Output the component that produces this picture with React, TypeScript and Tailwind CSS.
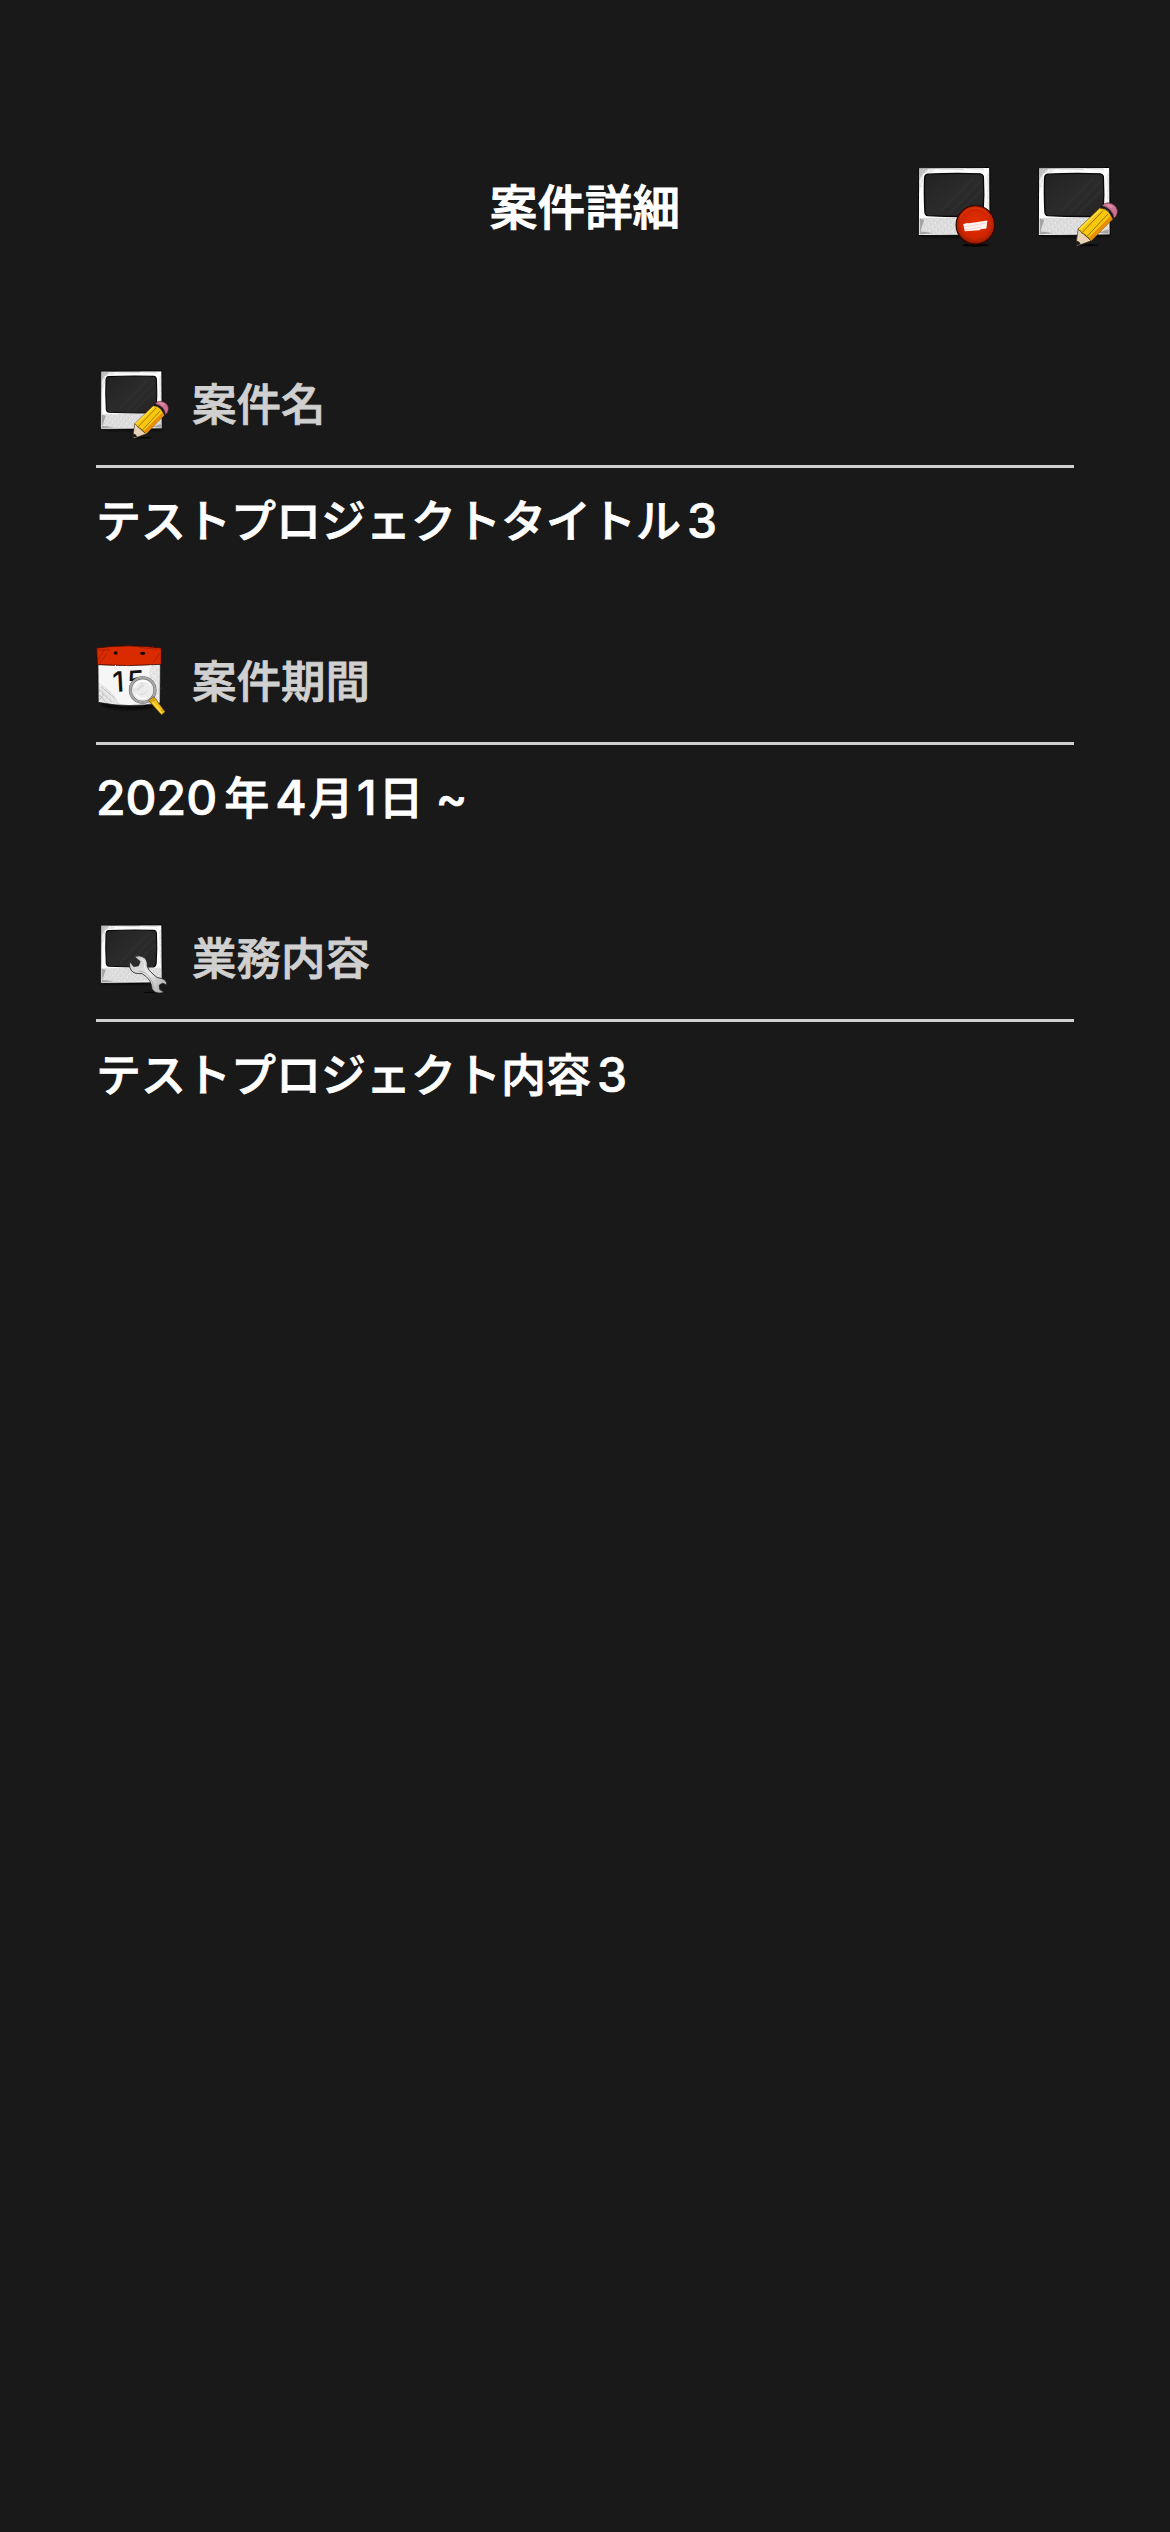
import type { ReactNode } from "react";

function SketchDefs() {
  return (
    <svg className="absolute h-0 w-0" aria-hidden="true">
      <defs>
        <filter id="rough" x="-10%" y="-10%" width="120%" height="120%">
          <feTurbulence type="fractalNoise" baseFrequency="0.09" numOctaves="2" seed="4" result="n" />
          <feDisplacementMap in="SourceGraphic" in2="n" scale="5" xChannelSelector="R" yChannelSelector="G" />
        </filter>
        <filter id="soft" x="-30%" y="-100%" width="160%" height="300%">
          <feGaussianBlur stdDeviation="4" />
        </filter>
        <pattern id="hatch" width="14" height="14" patternUnits="userSpaceOnUse" patternTransform="rotate(38)">
          <path d="M2 0V14M8 0V9M11 4V14" stroke="#8a8a8a" strokeWidth="1.6" opacity="0.6" />
        </pattern>
        <linearGradient id="glass" x1="0" y1="0" x2="1" y2="1">
          <stop offset="0" stopColor="#222" />
          <stop offset="0.5" stopColor="#2b2b2b" />
          <stop offset="1" stopColor="#252525" />
        </linearGradient>
        <radialGradient id="ball" cx="0.5" cy="0.45" r="0.55">
          <stop offset="0" stopColor="#e43000" />
          <stop offset="0.7" stopColor="#d02600" />
          <stop offset="1" stopColor="#961b00" />
        </radialGradient>
        <linearGradient id="steel" x1="0" y1="0" x2="1" y2="1">
          <stop offset="0" stopColor="#c4c4c4" />
          <stop offset="0.5" stopColor="#e6e6e6" />
          <stop offset="1" stopColor="#a5a5a5" />
        </linearGradient>
      </defs>
    </svg>
  );
}

function Frame({ className, children }: { className: string; children: ReactNode }) {
  return (
    <svg className={className} viewBox="36 45 256 246" aria-hidden="true">
      <ellipse cx="160" cy="256" rx="112" ry="6" fill="#000" opacity="0.7" filter="url(#soft)" />
      <g filter="url(#rough)">
        <path d="M53 53L267 52L268 255L52 257Z" fill="#fcfcfc" stroke="#060606" strokeWidth="3" />
        <path d="M57 204L264 202L264 250L56 253Z" fill="#ececec" />
        <path d="M57 204L264 202L264 250L56 253Z" fill="url(#hatch)" />
        <path d="M54 54L110 54L92 66L68 70L66 96L54 130Z" fill="url(#hatch)" />
        <path d="M54 54H84L62 76L55 90Z" fill="#999" opacity="0.5" />
        <path d="M56 205L70 210L56 250ZM56 244L100 250L56 254ZM230 249L264 238L264 252Z" fill="#808080" opacity="0.6" />
        <path d="M257 80L266 60V190L262 190Z" fill="url(#hatch)" />
        <path d="M110 56L190 58M196 55L250 57" stroke="#c0c0c0" strokeWidth="2" />
      </g>
      <path
        d="M80 72Q160 68 238 71Q247 72 248 81Q251 135 247 188Q246 197 237 199Q160 201 82 197Q73 196 72 187Q69 130 71 83Q72 73 80 72Z"
        fill="url(#glass)"
        stroke="#080808"
        strokeWidth="4"
      />
      <path
        d="M122 184L218 82M148 188L240 94M172 190L242 122"
        stroke="#363636"
        strokeWidth="7"
        opacity="0.4"
        strokeLinecap="round"
      />
      {children}
    </svg>
  );
}

function Pencil() {
  return (
    <g>
      <ellipse cx="196" cy="286" rx="38" ry="3" fill="#000" opacity="0.8" />
      <path d="M172 237L165 286L170 288L211 273Z" fill="#e9d3b4" stroke="#3b2d18" strokeWidth="2" />
      <path d="M167 272L164 287L180 283Q176 274 167 272Z" fill="#1b1b1b" />
      <path d="M171 238L237 174Q264 176 276 207L211 273Q206 262 197 260Q193 250 183 250Q180 241 171 238Z" fill="#f9c80e" stroke="#5f4300" strokeWidth="2" />
      <path d="M203 264L269 198Q273 202 276 207L211 273Q208 267 203 264Z" fill="#e88d09" />
      <path d="M183 249L247 182M198 260L262 192" stroke="#5a4500" strokeWidth="2" />
      <path d="M176 238L238 179" stroke="#ffe24b" strokeWidth="4" />
      <path d="M236 172Q266 176 277 208L283 204Q279 174 243 166Z" fill="#181920" />
      <path d="M244 167Q254 154 274 161Q292 170 290 188Q288 200 280 205Q276 176 244 167Z" fill="#cc7190" stroke="#552737" strokeWidth="2" />
      <path d="M255 164Q266 160 278 170Q270 176 263 170Z" fill="#dc8fa8" />
    </g>
  );
}

function MinusBadge() {
  return (
    <g>
      <ellipse cx="224" cy="286" rx="40" ry="5" fill="#000" opacity="0.8" />
      <g filter="url(#rough)">
        <circle cx="224" cy="225" r="58" fill="url(#ball)" stroke="#310800" strokeWidth="4" />
        <path d="M177 205Q194 171 228 174Q254 176 266 198" stroke="#f05a31" strokeWidth="3" opacity="0.35" fill="none" />
      </g>
      <path d="M187 223L198 219L205 220L260 212L257 236L240 238L236 241L192 244Z" fill="#fff3ef" />
      <path d="M190 231L258 219M192 240L240 232" stroke="#f8c9bc" strokeWidth="2" />
    </g>
  );
}

function Wrench() {
  return (
    <g transform="translate(-3.3 -0.9) scale(1.176)">
      <ellipse cx="208" cy="247" rx="34" ry="3" fill="#000" opacity="0.8" />
      <path
        d="M148 139Q165 134 177 142Q188 151 186 167Q188 180 204 192Q214 205 229 205Q240 207 244 217L245 224L232 219L222 225L224 238L237 246Q218 252 206 243Q199 236 199 226Q197 211 183 199Q171 186 158 190Q140 190 134 171L133 153L146 169L160 167L165 154Z"
        fill="url(#steel)"
        stroke="#242424"
        strokeWidth="2.5"
        strokeLinejoin="round"
      />
      <path d="M169 147Q181 153 178 168Q181 184 202 200" stroke="#fff" strokeWidth="2.5" fill="none" opacity="0.7" />
      <path d="M160 184Q180 181 193 201Q205 215 205 232" stroke="#999" strokeWidth="2" fill="none" />
    </g>
  );
}

function CalendarIcon() {
  return (
    <svg className="mb-[3px] ml-[-1px] h-[71px] w-[71px]" viewBox="30 33 213 213" aria-hidden="true">
      <path d="M42 206Q130 230 228 208L222 215Q130 236 55 216Z" fill="#000" filter="url(#soft)" />
      <g filter="url(#rough)">
        <path d="M39 90L226 88L225 207Q130 223 40 205Z" fill="#f6f6f6" stroke="#151515" strokeWidth="2" />
        <path d="M40 145L75 170L108 212L41 204ZM195 92H224V206L190 210Z" fill="url(#hatch)" />
        <path d="M42 167L82 206M42 182L64 206M50 160L92 194M44 198L56 180" stroke="#aaa" strokeWidth="2" />
        <path d="M35 42Q130 29 229 42L229 91Q130 98 37 92Z" fill="#d92b05" stroke="#3c0b02" strokeWidth="2.5" />
        <path d="M36 82L58 48M44 88L66 58M207 84L223 59M40 48H76M160 40L218 46" stroke="#961b00" strokeWidth="2" />
      </g>
      <ellipse cx="92" cy="57" rx="6" ry="5" fill="#210803" />
      <ellipse cx="173" cy="58" rx="8" ry="5" fill="#210803" />
      <g className="fill-[#111] font-[Inter,sans-serif] text-[84px] font-medium">
        <text x="84" y="174" transform="rotate(-3 84 174)">
          1
        </text>
        <text x="128" y="172" transform="rotate(-3 128 172)">
          5
        </text>
      </g>
      <circle cx="173" cy="168" r="37" fill="#ebebeb" fillOpacity="0.97" stroke="#555" strokeWidth="9" />
      <circle cx="173" cy="168" r="37" fill="none" stroke="#a8a8a8" strokeWidth="7" />
      <path d="M148 160Q154 142 173 141Q190 141 197 154M152 181Q165 199 187 190" stroke="#fff" strokeWidth="4" fill="none" />
      <path d="M157 168Q164 154 177 155M165 181Q182 182 187 169" stroke="#ccc" strokeWidth="2" fill="none" />
      <path d="M191 200L207 188L240 233L230 243Z" fill="#f5bd16" stroke="#553b00" strokeWidth="2" />
      <path d="M196 203L208 193M199 207L211 197M223 236L235 226" stroke="#8d6200" strokeWidth="2" />
      <path d="M202 203L230 237" stroke="#ffe053" strokeWidth="4" />
    </svg>
  );
}

function Section({ icon, label, children }: { icon: ReactNode; label: string; children: ReactNode }) {
  return (
    <section className="h-[277px]">
      <div className="box-content flex h-[120px] items-center border-b-[3px] border-[#d0d0d0]">
        <div className="w-[96px] shrink-0">{icon}</div>
        <h2 className="pb-[5px] text-[44.5px] leading-none font-medium text-[#d0d0d0] [-webkit-text-stroke:0.8px_#d0d0d0]">
          {label}
        </h2>
      </div>
      <p className="flex h-[106px] items-center text-[45px] leading-none font-medium whitespace-pre text-white">{children}</p>
    </section>
  );
}

function Jp({ className = "", children }: { className?: string; children: ReactNode }) {
  return <span className={`pb-[6px] [-webkit-text-stroke:0.8px_#fff] ${className}`}>{children}</span>;
}

function Num({ className = "", children }: { className?: string; children: ReactNode }) {
  return (
    <span className={`font-[Inter,sans-serif] text-[48px] font-medium [-webkit-text-stroke:0.7px_#fff] ${className}`}>
      {children}
    </span>
  );
}

export default function App() {
  return (
    <div className="min-h-[2532px] w-[1170px] bg-[#191919] pt-[141px] font-['Noto_Sans_CJK_JP',sans-serif]" lang="ja">
      <SketchDefs />
      <header className="grid h-[130px] grid-cols-[1fr_auto_1fr] items-center px-[52px]">
        <span />
        <h1 className="pb-[2px] text-[47.6px] leading-none font-medium text-white [-webkit-text-stroke:1px_#fff]">案件詳細</h1>
        <div className="flex justify-end gap-[35px] pb-[1px]">
          <button type="button" aria-label="削除">
            <Frame className="block h-[82px] w-[85px]">
              <MinusBadge />
            </Frame>
          </button>
          <button type="button" aria-label="編集">
            <Frame className="block h-[82px] w-[85px]">
              <Pencil />
            </Frame>
          </button>
        </div>
      </header>
      <main className="px-24 pt-[74px]">
        <Section
          icon={
            <Frame className="mb-[3px] h-[70px] w-[73px]">
              <Pencil />
            </Frame>
          }
          label="案件名"
        >
          <Jp>テストプロジェクトタイトル</Jp>
          <Num className="ml-[6px]">3</Num>
        </Section>
        <Section icon={<CalendarIcon />} label="案件期間">
          <Num>2020</Num>
          <Jp className="ml-[7px]">年</Jp>
          <Num className="ml-[6px]">4</Num>
          <Jp className="ml-[2px]">月</Jp>
          <Num className="ml-[3px]">1</Num>
          <Jp className="ml-[2px]">日</Jp>
          <Num className="ml-[12px]">~</Num>
        </Section>
        <Section
          icon={
            <Frame className="mb-[3px] h-[70px] w-[73px]">
              <Wrench />
            </Frame>
          }
          label="業務内容"
        >
          <Jp>テストプロジェクト内容</Jp>
          <Num className="ml-[6px]">3</Num>
        </Section>
      </main>
    </div>
  );
}
